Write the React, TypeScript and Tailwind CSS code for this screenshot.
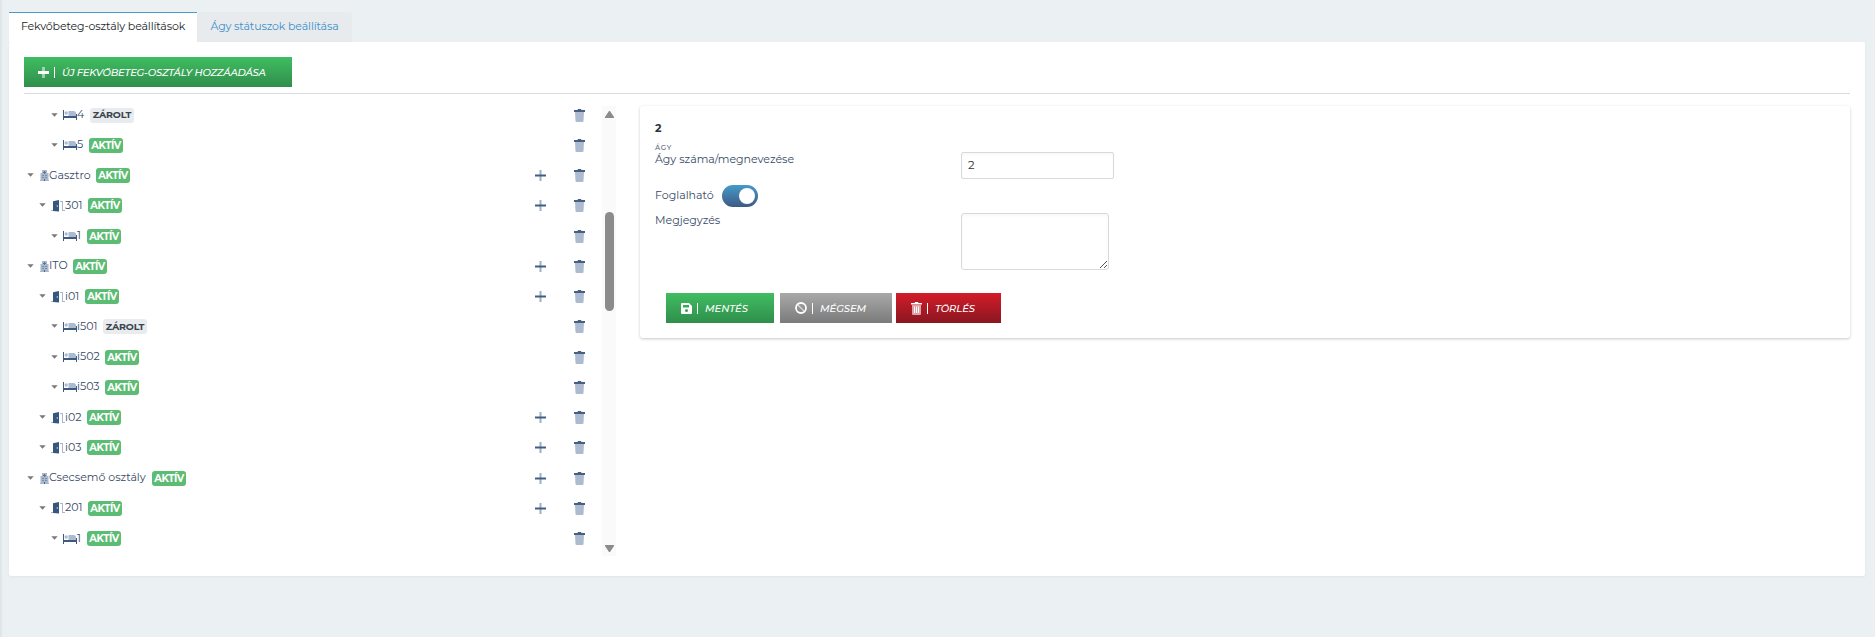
import React from 'react';

type Kind = 'ward' | 'room' | 'bed';
type Row = { kind: Kind; name: string; locked?: boolean; w: string };

const rows: Row[] = [
  { kind: 'bed', name: '4', locked: true, w: 'w-[13px]' },
  { kind: 'bed', name: '5', w: 'w-[12px]' },
  { kind: 'ward', name: 'Gasztro', w: 'w-[47px]' },
  { kind: 'room', name: '301', w: 'w-[23px]' },
  { kind: 'bed', name: '1', w: 'w-[10px]' },
  { kind: 'ward', name: 'ITO', w: 'w-[24px]' },
  { kind: 'room', name: 'i01', w: 'w-[20px]' },
  { kind: 'bed', name: 'i501', locked: true, w: 'w-[26px]' },
  { kind: 'bed', name: 'i502', w: 'w-[28px]' },
  { kind: 'bed', name: 'i503', w: 'w-[28px]' },
  { kind: 'room', name: 'i02', w: 'w-[22px]' },
  { kind: 'room', name: 'i03', w: 'w-[22px]' },
  { kind: 'ward', name: 'Csecsemő osztály', w: 'w-[103px]' },
  { kind: 'room', name: '201', w: 'w-[23px]' },
  { kind: 'bed', name: '1', w: 'w-[10px]' },
];

const indent: Record<Kind, string> = { ward: 'pl-[3px]', room: 'pl-[15px]', bed: 'pl-[27px]' };

function KindIcon({ kind }: { kind: Kind }) {
  if (kind === 'ward')
    return (
      <svg className="ml-[6px] h-[11px] w-[9px] shrink-0" viewBox="0 0 9 11">
        <path fill="#a9b8cc" d="M.5 3H2V0h5v3h1.500v7H9v1H0v-1h.5z" />
        <path fill="#5f7794" d="M4 1h1v3H4zM3 2h3v1H3z" />
        <path fill="#4d6788" d="M2.500 5h1v1h-1zM5.500 5h1v1h-1zM2.500 7h1v1h-1zM5.500 7h1v1h-1zM4 9h1v2H4z" />
      </svg>
    );
  if (kind === 'room')
    return (
      <svg className="ml-[5px] h-[12px] w-[14px] shrink-0" viewBox="0 0 14 12">
        <path fill="#a9b8cc" d="M0 10h2v1H0zM9 1h3v9h2v1h-3V2H9z" />
        <path fill="#34567f" d="M2 1.200 8 0v11.500L2 11z" />
        <circle cx="6.300" cy="6" r=".7" fill="#dce5ef" />
      </svg>
    );
  return (
    <svg className="ml-[5px] h-[10px] w-[14px] shrink-0" viewBox="0 0 14 10">
      <path fill="#a9bcd4" d="M5.500 1h5q2.500 0 2.500 2.500V6H5.500z" />
      <circle cx="3.200" cy="3" r="1.700" fill="#a9bcd4" />
      <path fill="#3d5a80" d="M0 0h1v6h12V4h1v6h-1V8H1v2H0z" />
    </svg>
  );
}

function Plus() {
  return (
    <svg className="h-[11px] w-[11px]" viewBox="0 0 11 11">
      <path fill="#9bb0c8" d="M4.500 0h2v11h-2z" />
      <path fill="#3f5e80" d="M0 4.500h11v2H0z" />
    </svg>
  );
}

function Trash() {
  return (
    <svg className="h-[13px] w-[11px]" viewBox="0 0 11 13">
      <path fill="#adbbd0" d="M1 3h9l-.5 9q-.1 1-1 1h-6q-.9 0-1-1z" />
      <path fill="#47607f" d="M0 1h3.500L4 0h3l.5 1H11v2H0z" />
    </svg>
  );
}

function TreeRow({ row }: { row: Row }) {
  return (
    <div className={`flex h-[30.25px] items-center ${indent[row.kind]}`}>
      <svg className="-mt-px h-[4px] w-[7px] shrink-0" viewBox="0 0 7 4">
        <path fill="#77797b" d="M.3.300h6.400L3.500 3.700z" />
      </svg>
      <KindIcon kind={row.kind} />
      <span className={`${row.w} -mt-[2px] shrink-0 whitespace-nowrap text-[11px] leading-[16px] text-[#364a66]`}>{row.name}</span>
      {row.locked ? (
        <span className="flex h-[15px] w-[44px] items-center justify-center rounded-[3px] bg-[#e9ecef] text-[9.5px] font-bold tracking-[-0.2px] text-[#3b444d]">ZÁROLT</span>
      ) : (
        <span className="flex h-[15px] w-[34px] items-center justify-center rounded-[3px] bg-[#5cbc73] text-[10px] font-bold tracking-[-0.4px] text-white">AKTÍV</span>
      )}
      <div className="ml-auto flex w-[50px] items-center justify-between">
        <span className="w-[11px]">{row.kind !== 'bed' && <Plus />}</span>
        <Trash />
      </div>
    </div>
  );
}

function ActionButton({ className, icon, children }: { className: string; icon: React.ReactNode; children: React.ReactNode }) {
  return (
    <button className={`flex h-[30px] shrink-0 items-center bg-linear-to-b text-white ${className}`}>
      <span className="flex w-[12px] shrink-0 justify-center">{icon}</span>
      <span className="ml-[5px] h-[11px] w-px shrink-0 bg-white" />
      <span className="ml-[7px] whitespace-nowrap font-medium italic">{children}</span>
    </button>
  );
}

export default function App() {
  return (
    <div className="flex h-[637px] w-full flex-col bg-linear-to-r from-[#dce2e5] via-[#ebf0f3] via-[3px] to-[#ebf0f3] to-[4px] pl-[9px] pr-[10px] pt-[12px] font-['Montserrat','Inter',sans-serif] text-[12px]">
      <nav className="flex h-[30px] shrink-0">
        <div className="flex w-[188px] items-start justify-center whitespace-nowrap border-t border-[#4a9aca] bg-white pt-[4px] text-[11px] leading-[18px] tracking-[-0.14px] text-[#212529]">Fekvőbeteg-osztály beállítások</div>
        <div className="flex w-[155px] items-start justify-center whitespace-nowrap rounded-t-[3px] bg-[#e8ebee] pt-[5px] text-[11px] leading-[18px] tracking-[-0.13px] text-[#3d8fc9]">Ágy státuszok beállítása</div>
      </nav>
      <main className="flex h-[534px] shrink-0 flex-col rounded-[2px] bg-white px-[15px] pt-[15px] shadow-[0_1px_3px_rgba(0,0,0,0.05)]">
        <ActionButton
          className="w-[268px] from-[#40bd62] to-[#2f8f4b] pl-[13px] text-[10px] tracking-[-0.23px]"
          icon={
            <svg className="h-[11px] w-[11px]" viewBox="0 0 11 11">
              <path fill="#fff" opacity=".5" d="M4 0h3v11H4z" />
              <path fill="#fff" d="M0 4h11v3H0z" />
            </svg>
          }
        >
          ÚJ FEKVŐBETEG-OSZTÁLY HOZZÁADÁSA
        </ActionButton>
        <div className="mt-[6px] h-px shrink-0 bg-[#d9dddf]" />
        <div className="flex">
          <div className="w-[562px] pr-[1px] pt-[6px]">
            {rows.map((row, i) => (
              <TreeRow key={i} row={row} />
            ))}
          </div>
          <div className="ml-[16px] mt-[12px] flex h-[450px] w-[14px] shrink-0 flex-col items-center bg-[#fafafa]">
            <svg className="mt-[5px] h-[7px] w-[9px] shrink-0" viewBox="0 0 9 7">
              <path fill="#8b8b8b" d="M4 0h1l4 6v1H0V6z" />
            </svg>
            <div className="mt-[94px] h-[99px] w-[9px] shrink-0 rounded-full bg-[#8b8b8b]" />
            <svg className="mb-[4px] mt-auto h-[7px] w-[9px] shrink-0" viewBox="0 0 9 7">
              <path fill="#8b8b8b" d="M0 0h9v1L5 7H4L0 1z" />
            </svg>
          </div>
          <section className="ml-[24px] mt-[12px] flex h-[232px] flex-1 flex-col rounded-[3px] bg-white pl-[15px] shadow-[0_1px_3px_rgba(0,0,0,0.22)]">
            <div className="mt-[13px] h-[19px] text-[11px] font-bold leading-[18px] text-[#2c3338]">2</div>
            <div className="mt-[5px] h-[8px] text-[7px] font-medium leading-[10px] tracking-[0.6px] text-[#5a6570]">ÁGY</div>
            <div className="flex h-[28px] text-[#364a66]">
              <label className="w-[306px] text-[11px] leading-[17px]">Ágy száma/megnevezése</label>
              <input
                readOnly
                value="2"
                className="mt-[1px] h-[27px] w-[153px] rounded-[2px] border border-[#d6dadd] bg-white px-[6px] pb-[2px] text-[11.5px] text-[#333] shadow-[inset_0_2px_3px_rgba(0,0,0,0.03)] outline-none"
              />
            </div>
            <div className="mt-[6px] flex h-[22px] items-center text-[#364a66]">
              <span className="-mt-[2px] w-[67px] text-[11px]">Foglalható</span>
              <span className="flex h-[22px] w-[36px] items-center justify-end rounded-full bg-linear-to-b from-[#439bc9] to-[#3d5a85] pr-[3px]">
                <span className="h-[16px] w-[16px] rounded-full bg-white" />
              </span>
            </div>
            <div className="mt-[6px] flex h-[57px] text-[#364a66]">
              <label className="w-[306px] text-[11px] leading-[15px]">Megjegyzés</label>
              <div className="flex h-[57px] w-[148px] items-end justify-end rounded-[3px] border border-[#d6dadd] p-[1px] shadow-[inset_0_2px_3px_rgba(0,0,0,0.03)]">
                <svg className="h-[7px] w-[7px]" viewBox="0 0 7 7">
                  <path stroke="#555" fill="none" d="M0 7 7 0M4 7l3-3" />
                </svg>
              </div>
            </div>
            <div className="ml-[11px] mt-[23px] flex text-[10px] tracking-[-0.05px]">
              <ActionButton
                className="w-[108px] from-[#40bd62] to-[#2f8f4b] pl-[14px]"
                icon={
                  <svg className="h-[11px] w-[11px]" viewBox="0 0 11 11">
                    <path fill="#fff" fillRule="evenodd" d="M1 0h7l3 3v7q0 1-1 1H1q-1 0-1-1V1q0-1 1-1zm1 2v2.500h6V2zm3.500 4a1.500 1.500 0 1 0 0 3 1.500 1.500 0 0 0 0-3z" />
                  </svg>
                }
              >
                MENTÉS
              </ActionButton>
              <ActionButton
                className="ml-[6px] w-[112px] from-[#a9a9a9] to-[#7b7b7b] pl-[15px]"
                icon={
                  <svg className="h-[12px] w-[12px]" viewBox="0 0 12 12">
                    <path stroke="#fff" strokeWidth="1.500" opacity=".6" d="m2.500 2.500 7 7" />
                    <circle cx="6" cy="6" r="5" fill="none" stroke="#fff" strokeWidth="1.800" />
                  </svg>
                }
              >
                MÉGSEM
              </ActionButton>
              <ActionButton
                className="ml-[4px] w-[105px] from-[#d31c29] to-[#8a1620] pl-[14px]"
                icon={
                  <svg className="h-[13px] w-[11px]" viewBox="0 0 11 13">
                    <path fill="#fff" opacity=".6" d="M1 3h9v9q0 1-1 1H2q-1 0-1-1z" />
                    <path fill="#fff" d="M0 1h3.500L4 0h3l.5 1H11v1.500H0zM3 4.500h1v6.500H3zM5 4.500h1v6.500H5zM7 4.500h1v6.500H7z" />
                  </svg>
                }
              >
                TÖRLÉS
              </ActionButton>
            </div>
          </section>
        </div>
      </main>
    </div>
  );
}
